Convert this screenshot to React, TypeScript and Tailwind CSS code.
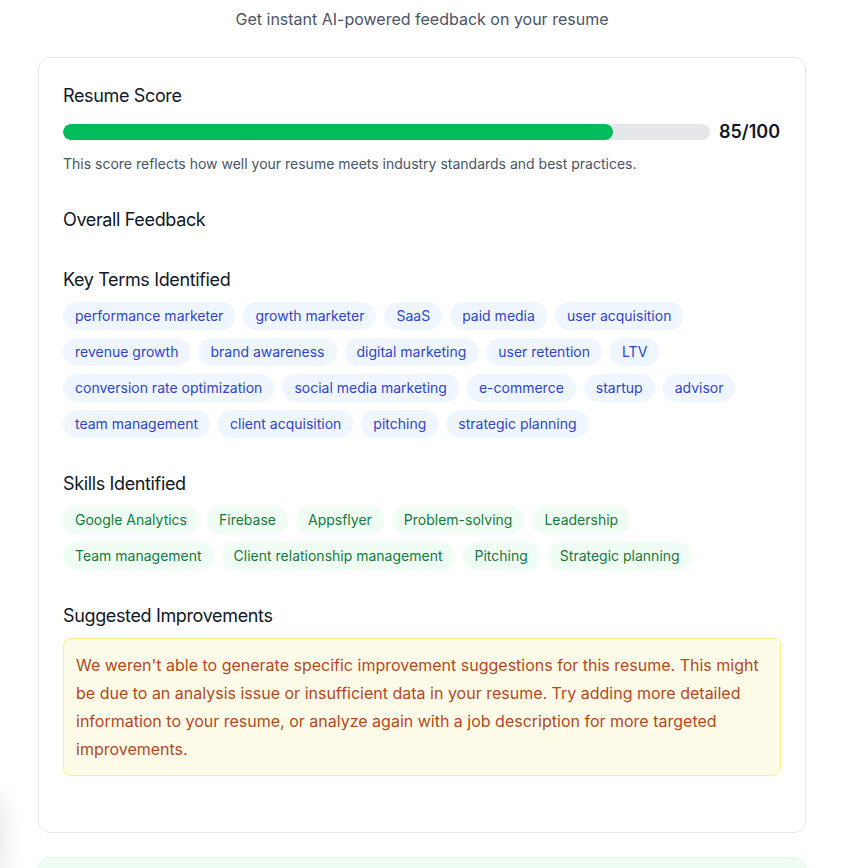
import React from 'react'

const keyTerms = [
  'performance marketer',
  'growth marketer',
  'SaaS',
  'paid media',
  'user acquisition',
  'revenue growth',
  'brand awareness',
  'digital marketing',
  'user retention',
  'LTV',
  'conversion rate optimization',
  'social media marketing',
  'e-commerce',
  'startup',
  'advisor',
  'team management',
  'client acquisition',
  'pitching',
  'strategic planning',
]

const skills = [
  'Google Analytics',
  'Firebase',
  'Appsflyer',
  'Problem-solving',
  'Leadership',
  'Team management',
  'Client relationship management',
  'Pitching',
  'Strategic planning',
]

function SectionTitle({ children }: { children: React.ReactNode }) {
  return <h3 className="text-lg font-normal tracking-[-0.02em] text-gray-900 mb-2">{children}</h3>
}

export default function App() {
  const score = 85

  return (
    <div
      className="relative min-h-screen bg-white overflow-hidden"
      style={{ fontFamily: 'Inter, "Noto Sans", sans-serif' }}
    >
      {/* floating element peeking from the left edge */}
      <div className="absolute left-[-70px] top-[798px] w-[70px] h-[80px] rounded-2xl bg-white shadow-[0_0_28px_rgba(0,0,0,0.14)]" />

      <div className="w-[768px] ml-[38px]">
        <p className="text-center text-gray-600 text-base leading-6 mt-[7px] mb-[26px]">
          Get instant AI-powered feedback on your resume
        </p>

        <div className="bg-white border border-gray-200 rounded-xl p-6 pb-14">
          <div className="flex flex-col gap-8">
            {/* Resume Score */}
            <div>
              <SectionTitle>Resume Score</SectionTitle>
              <div className="flex items-center h-7">
                <div className="flex-1 h-4 bg-gray-200 rounded-full overflow-hidden">
                  <div className="h-full bg-[#02bb5a] rounded-full" style={{ width: `${score}%` }} />
                </div>
                <span className="ml-[9px] w-[62px] text-lg font-semibold text-gray-900">{score}/100</span>
              </div>
              <p className="text-sm text-gray-600 mt-2">
                This score reflects how well your resume meets industry standards and best practices.
              </p>
            </div>

            {/* Overall Feedback */}
            <div>
              <h3 className="text-lg font-normal tracking-[-0.02em] text-gray-900">Overall Feedback</h3>
            </div>

            {/* Key Terms */}
            <div>
              <SectionTitle>Key Terms Identified</SectionTitle>
              <div className="flex flex-wrap gap-2">
                {keyTerms.map(term => (
                  <span key={term} className="px-3 py-1 text-sm bg-blue-50 text-[#2f45c9] rounded-full">
                    {term}
                  </span>
                ))}
              </div>
            </div>

            {/* Skills */}
            <div>
              <SectionTitle>Skills Identified</SectionTitle>
              <div className="flex flex-wrap gap-2">
                {skills.map(skill => (
                  <span key={skill} className="px-3 py-1 text-sm bg-green-50 text-[#137a3e] rounded-full">
                    {skill}
                  </span>
                ))}
              </div>
            </div>

            {/* Suggested Improvements */}
            <div>
              <SectionTitle>Suggested Improvements</SectionTitle>
              <div className="bg-yellow-50 border border-yellow-200 rounded-lg p-3">
                <p className="text-base leading-7 text-[#b4491c]">
                  We weren't able to generate specific improvement suggestions for this resume. This might be
                  due to an analysis issue or insufficient data in your resume. Try adding more detailed
                  information to your resume, or analyze again with a job description for more targeted
                  improvements.
                </p>
              </div>
            </div>
          </div>
        </div>

        <div className="mt-6 h-[120px] bg-green-50 border border-green-100 rounded-xl" />
      </div>
    </div>
  )
}
